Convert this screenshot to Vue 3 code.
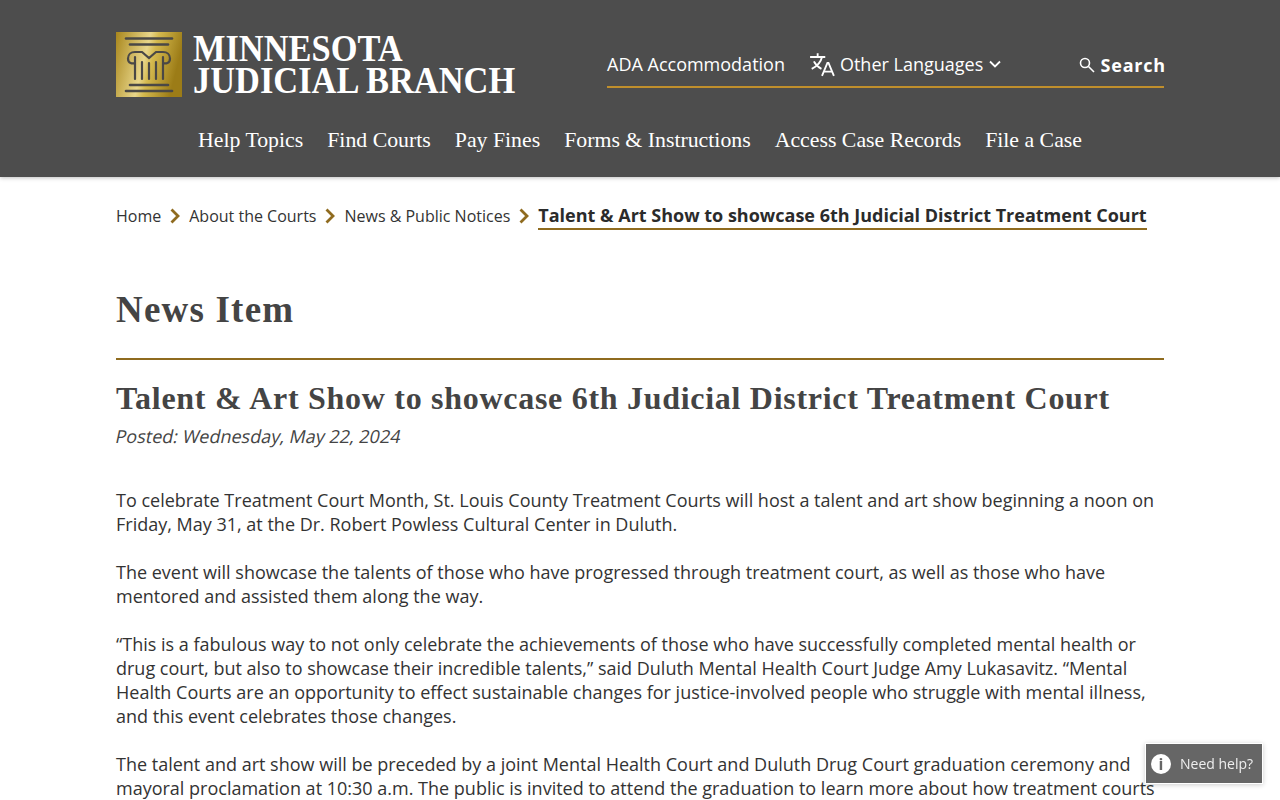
<template>
  <div class="page">
    <header class="site-header">
      <div class="header-top">
        <a class="brand" href="#">
          <svg class="brand-mark" viewBox="0 0 66 65" width="66" height="65" aria-hidden="true">
            <defs>
              <linearGradient id="gold" x1="0" y1="0" x2="1" y2="0.25">
                <stop offset="0" stop-color="#a8861c" />
                <stop offset="0.5" stop-color="#e8d68a" />
                <stop offset="0.62" stop-color="#d4b94e" />
                <stop offset="1" stop-color="#9c7c17" />
              </linearGradient>
            </defs>
            <rect width="66" height="65" fill="url(#gold)" />
            <g fill="none" stroke="#4a4846" stroke-linecap="round">
              <path d="M10 6.500H56" stroke-width="2.600" />
              <path d="M14 12.500H52" stroke-width="2.600" />
              <path d="M19 31c-2.500 1-7 .5-7-4.500 0-4 3-6.500 7-6.500h7l7 6 7-6h7c4 0 7 2.500 7 6.500 0 5-4.500 5.500-7 4.500" stroke-width="2.200" />
              <path d="M19 25V47M26 30V47M33 31V47M40 30V47M47 25V47" stroke-width="2.200" />
              <path d="M14 53H52" stroke-width="2.600" />
              <path d="M10 59H56" stroke-width="2.600" />
            </g>
          </svg>
          <span class="brand-name">MINNESOTA<br />JUDICIAL BRANCH</span>
        </a>
        <div class="utility">
          <a class="utility-link" href="#">ADA Accommodation</a>
          <a class="utility-link lang" href="#">
            <svg viewBox="0 0 24 24" width="26" height="26" fill="none" stroke="#fff" stroke-width="1.700" aria-hidden="true">
              <path d="M1 5.500h14M8 2v3.500M12 5.500c-1 4.500-4.500 8.500-9.500 11M4.500 9.500c1.500 3 4 5.500 7 7" />
              <path d="M12 23l5-12h1l5 12M13.700 19h8" />
            </svg>
            <span>Other Languages</span>
            <svg viewBox="0 0 14 14" width="14" height="14" fill="none" stroke="#fff" stroke-width="1.800" aria-hidden="true">
              <path d="M2 4.500l5 5 5-5" />
            </svg>
          </a>
          <a class="search" href="#">
            <svg viewBox="0 0 16 16" width="16" height="16" fill="none" stroke="#fff" stroke-width="1.600" aria-hidden="true">
              <circle cx="6" cy="6" r="4.500" />
              <path d="M9.500 9.500l5.500 5.500" />
            </svg>
            <span>Search</span>
          </a>
        </div>
      </div>
      <nav class="main-nav">
        <a v-for="item in navItems" :key="item" href="#">{{ item }}</a>
      </nav>
    </header>

    <main class="content">
      <ol class="crumbs">
        <li v-for="item in crumbs" :key="item">
          <a href="#">{{ item }}</a>
          <svg viewBox="0 0 12 16" width="12" height="16" fill="none" stroke="#8f6b1f" stroke-width="2.800" aria-hidden="true">
            <path d="M2.500 1.500L9 8l-6.500 6.500" />
          </svg>
        </li>
        <li class="current">Talent &amp; Art Show to showcase 6th Judicial District Treatment Court</li>
      </ol>

      <h1>News Item</h1>
      <h2>Talent &amp; Art Show to showcase 6th Judicial District Treatment Court</h2>
      <p class="posted"><span>Posted: Wednesday, May 22, 2024</span></p>

      <div class="article">
        <p v-for="para in paragraphs" :key="para">{{ para }}</p>
      </div>
    </main>

    <a class="help" href="#">
      <span class="help-icon">i</span>
      <span>Need help?</span>
    </a>
  </div>
</template>

<script setup>
const navItems = [
  'Help Topics',
  'Find Courts',
  'Pay Fines',
  'Forms & Instructions',
  'Access Case Records',
  'File a Case'
]

const crumbs = ['Home', 'About the Courts', 'News & Public Notices']

const paragraphs = [
  'To celebrate Treatment Court Month, St. Louis County Treatment Courts will host a talent and art show beginning a noon on Friday, May 31, at the Dr. Robert Powless Cultural Center in Duluth.',
  'The event will showcase the talents of those who have progressed through treatment court, as well as those who have mentored and assisted them along the way.',
  '“This is a fabulous way to not only celebrate the achievements of those who have successfully completed mental health or drug court, but also to showcase their incredible talents,” said Duluth Mental Health Court Judge Amy Lukasavitz. “Mental Health Courts are an opportunity to effect sustainable changes for justice-involved people who struggle with mental illness, and this event celebrates those changes.',
  'The talent and art show will be preceded by a joint Mental Health Court and Duluth Drug Court graduation ceremony and mayoral proclamation at 10:30 a.m. The public is invited to attend the graduation to learn more about how treatment courts'
]
</script>

<style>
html,
body {
  margin: 0;
  background: #fff;
}
</style>

<style scoped>
.page {
  height: 800px;
  overflow: hidden;
  font-family: "Open Sans", sans-serif;
  color: #333;
}

a {
  color: inherit;
  text-decoration: none;
}

.site-header {
  height: 177px;
  box-sizing: border-box;
  padding: 32px 116px 0;
  background: #4d4d4d;
  box-shadow: 0 1px 4px rgba(0, 0, 0, 0.25);
  color: #fff;
}

.header-top {
  display: flex;
  justify-content: space-between;
  height: 65px;
}

.brand {
  display: flex;
  gap: 11px;
}

.brand-mark {
  display: block;
}

.brand-name {
  display: block;
  margin-top: 1px;
  font-family: "Liberation Serif", serif;
  font-weight: 700;
  font-size: 37px;
  line-height: 32px;
  white-space: nowrap;
  transform: scaleX(0.93);
  transform-origin: left top;
}

.utility {
  width: 557px;
  height: 56px;
  box-sizing: border-box;
  display: flex;
  align-items: center;
  padding-top: 10px;
  border-bottom: 2px solid #c08f2c;
  font-size: 18px;
}

.lang {
  display: flex;
  align-items: center;
  margin-left: 24px;
  gap: 5px;
}

.search {
  display: flex;
  align-items: center;
  gap: 6px;
  margin-left: auto;
  margin-right: -2px;
  padding-top: 2px;
  font-weight: 700;
  letter-spacing: 0.8px;
}

.main-nav {
  display: flex;
  justify-content: center;
  gap: 24px;
  margin-top: 26px;
  font-family: "Liberation Serif", serif;
  font-size: 21.800px;
  line-height: 34px;
}

.content {
  padding: 0 116px;
}

.crumbs {
  display: flex;
  align-items: flex-start;
  margin: 0;
  padding: 26px 0 0;
  list-style: none;
  font-size: 16px;
  line-height: 25px;
  white-space: nowrap;
}

.crumbs li {
  display: flex;
  align-items: center;
}

.crumbs a {
  padding-top: 1px;
}

.crumbs svg {
  margin: 0 8px;
}

.crumbs .current {
  font-size: 18px;
  font-weight: 700;
  border-bottom: 2px solid #8f6b1f;
  color: #2b2b2b;
}

h1 {
  margin: 58px 0 0;
  padding-bottom: 26px;
  border-bottom: 2px solid #8f6b1f;
  font-family: "Liberation Serif", serif;
  font-size: 37px;
  letter-spacing: 1.200px;
  line-height: 44px;
  color: #444;
}

h2 {
  margin: 17px 0 0;
  font-family: "Liberation Serif", serif;
  font-size: 32px;
  letter-spacing: 0.710px;
  line-height: 42px;
  color: #444;
}

.posted {
  margin: 5px 0 0;
  font-size: 18px;
  line-height: 24px;
  color: #444;
}

/* the reference slants the upright face instead of using the italic one */
.posted span {
  display: inline-block;
  transform: skewX(-12deg);
  transform-origin: left center;
}

.article {
  margin-top: 40px;
  font-size: 18px;
  line-height: 24px;
}

.article p {
  margin: 0 0 24px;
}

.help {
  position: fixed;
  left: 1146px;
  top: 744px;
  width: 116px;
  height: 39px;
  display: flex;
  align-items: center;
  gap: 9px;
  padding-left: 5px;
  box-sizing: border-box;
  background: #666;
  box-shadow: 0 0 0 1px #fff, 0 1px 5px 1px rgba(0, 0, 0, 0.2);
  color: #eee;
  font-size: 14px;
}

.help-icon {
  width: 20px;
  height: 20px;
  border-radius: 50%;
  background: #fff;
  color: #666;
  font-weight: 700;
  font-size: 16px;
  line-height: 20px;
  text-align: center;
}
</style>
